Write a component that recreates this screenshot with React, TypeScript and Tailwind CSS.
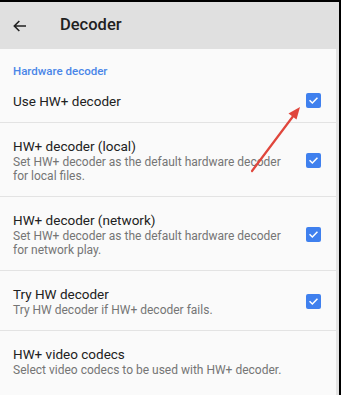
import React from 'react';

const Checkbox = () => (
  <div className="w-[15px] h-[15px] rounded-[2px] bg-[#3f80ee] flex items-center justify-center">
    <svg width="11" height="11" viewBox="0 0 24 24" fill="none" stroke="white" strokeWidth="3.2" strokeLinecap="square">
      <path d="M4.5 12.5l5 5L19.5 7" />
    </svg>
  </div>
);

interface RowProps {
  title: string;
  summary?: string;
  checked?: boolean;
  last?: boolean;
}

const Row: React.FC<RowProps> = ({ title, summary, checked, last }) => (
  <div className={`flex items-center pl-[13px] pr-[15px] ${last ? '' : 'border-b border-[#e3e3e3]'} ${summary ? 'pt-[14px] pb-[13px]' : 'h-[44px]'}`}>
    <div className="flex-1 min-w-0">
      <div className="text-[13.5px] leading-[18px] text-[#212121]">{title}</div>
      {summary && (
        <div className="max-w-[272px] text-[12px] leading-[14px] text-[#757575]">{summary}</div>
      )}
    </div>
    {checked && <Checkbox />}
  </div>
);

export default function App() {
  return (
    <div className="relative w-[341px] h-[395px] overflow-hidden bg-black pt-[2px] pr-[2px]" style={{ fontFamily: 'Roboto, "Noto Sans", sans-serif' }}>
      <div className="h-[47px] bg-[#e0e0e0] flex items-center">
        <svg className="ml-[12px]" width="16" height="16" viewBox="0 0 24 24" fill="none" stroke="#212121" strokeWidth="2.4">
          <path d="M21 12H4M11 4.5L3.5 12l7.5 7.5" />
        </svg>
        <span className="ml-[32px] text-[16.5px] font-medium text-[#212121]">Decoder</span>
      </div>
      <div className="flex h-full">
        <div className="flex-1 bg-[#fafafa]">
          <div className="pl-[13px] pt-[14px] text-[11.5px] leading-[16px] font-medium text-[#4a86e8]">Hardware decoder</div>
          <Row title="Use HW+ decoder" checked />
          <Row title="HW+ decoder (local)" summary="Set HW+ decoder as the default hardware decoder for local files." checked />
          <Row title="HW+ decoder (network)" summary="Set HW+ decoder as the default hardware decoder for network play." checked />
          <Row title="Try HW decoder" summary="Try HW decoder if HW+ decoder fails." checked />
          <Row title="HW+ video codecs" summary="Select video codecs to be used with HW+ decoder." last />
        </div>
        <div className="w-[3px] bg-[#e4e4e4]" />
      </div>
      <svg className="absolute left-0 top-0 pointer-events-none" width="341" height="395">
        <line x1="252" y1="171" x2="294" y2="115" stroke="#e0463c" strokeWidth="2.2" strokeLinecap="round" />
        <polygon points="300,107 296.5,119.5 288.5,113.5" fill="#e0463c" />
      </svg>
    </div>
  );
}
